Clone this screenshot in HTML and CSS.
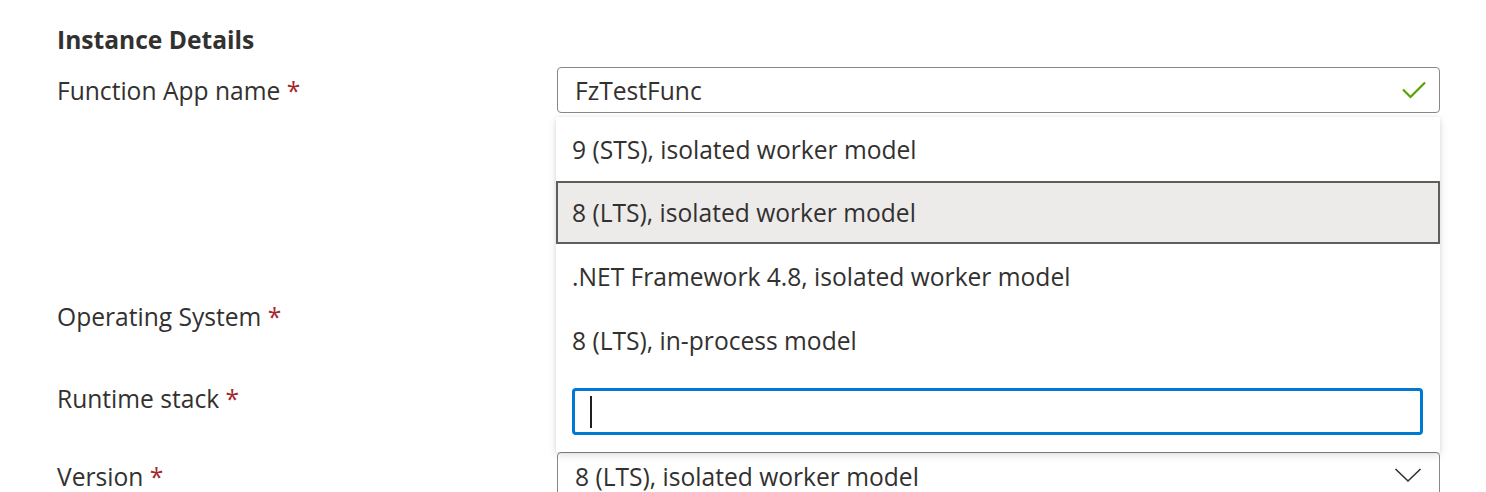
FILE: index.html
```html
<!DOCTYPE html>
<html>
<head>
<meta charset="utf-8">
<link rel="stylesheet" href="styles.css">
</head>
<body>
<div class="page">
  <h2 class="section-title">Instance Details</h2>
  <div class="form">
    <div class="row row-name">
      <div class="label">Function App name <span class="req">*</span></div>
      <div class="control">
        <div class="textbox">
          <span class="value">FzTestFunc</span>
          <svg class="check" width="26" height="20" viewBox="0 0 26 20"><path d="M2 9.5 L9.5 17 L24 2.5" fill="none" stroke="#57a300" stroke-width="2.2"/></svg>
        </div>
      </div>
    </div>
    <div class="row row-os">
      <div class="label">Operating System <span class="req">*</span></div>
      <div class="control"></div>
    </div>
    <div class="row row-runtime">
      <div class="label">Runtime stack <span class="req">*</span></div>
      <div class="control"></div>
    </div>
    <div class="row row-version">
      <div class="label">Version <span class="req">*</span></div>
      <div class="control">
        <div class="dropdown">
          <span class="value">8 (LTS), isolated worker model</span>
          <svg class="chevron" width="28" height="16" viewBox="0 0 28 16"><path d="M1.5 2 L14 14 L26.5 2" fill="none" stroke="#323130" stroke-width="1.6"/></svg>
        </div>
        <div class="callout">
          <div class="option">9 (STS), isolated worker model</div>
          <div class="option selected">8 (LTS), isolated worker model</div>
          <div class="option">.NET Framework 4.8, isolated worker model</div>
          <div class="option">8 (LTS), in-process model</div>
          <div class="search"><span class="caret"></span></div>
        </div>
      </div>
    </div>
  </div>
</div>
</body>
</html>
```
FILE: styles.css
```css
* { box-sizing: border-box; }
html, body { margin: 0; padding: 0; background: #fff; }
body {
  font-family: "Open Sans", "Noto Sans", sans-serif;
  color: #323130;
  font-size: 24.6px;
  overflow: hidden;
  height: 492px;
}
.page { padding: 25px 0 0 57px; }
.section-title {
  margin: 0;
  font-size: 24.6px;
  font-weight: 700;
  line-height: 30px;
  color: #323130;
}
.form { display: flex; flex-direction: column; }
.row {
  display: grid;
  grid-template-columns: 500px 883px;
  height: 46px;
  align-items: center;
}
.row-name { margin-top: 12px; }
.row-os { margin-top: 180px; }
.row-runtime { margin-top: 36px; }
.row-version { margin-top: 31px; }
.label { line-height: 30px; padding-top: 1px; }
.row-version .label { padding-top: 4px; }
.req { color: #a4262c; }
.control { position: relative; height: 46px; }
.textbox, .dropdown {
  height: 46px;
  border: 1.5px solid #8a8886;
  border-radius: 4px;
  display: flex;
  align-items: center;
  padding: 0 12px 0 17px;
  background: #fff;
}
.dropdown .value { padding-top: 3px; }
.value { flex: 1; }
.chevron { margin-right: 5px; }
.callout {
  position: absolute;
  left: -1px;
  bottom: 100%;
  width: 884px;
  height: 335px;
  background: #fff;
  box-shadow: 0 3px 8px rgba(0,0,0,0.13), 0 0 3px rgba(0,0,0,0.08);
  display: flex;
  flex-direction: column;
}
.option {
  height: 64px;
  display: flex;
  align-items: center;
  padding-left: 16px;
  flex: none;
}
.option.selected {
  height: 63px;
  background: #edebe9;
  border: 2px solid #605e5c;
  padding-left: 14px;
}
.search {
  margin: 16px 17px 0 16px;
  height: 47px;
  border: 3px solid #0078d4;
  border-radius: 4px;
  display: flex;
  align-items: center;
  padding-left: 15px;
}
.caret {
  width: 2px;
  height: 32px;
  background: #201f1e;
}
```
